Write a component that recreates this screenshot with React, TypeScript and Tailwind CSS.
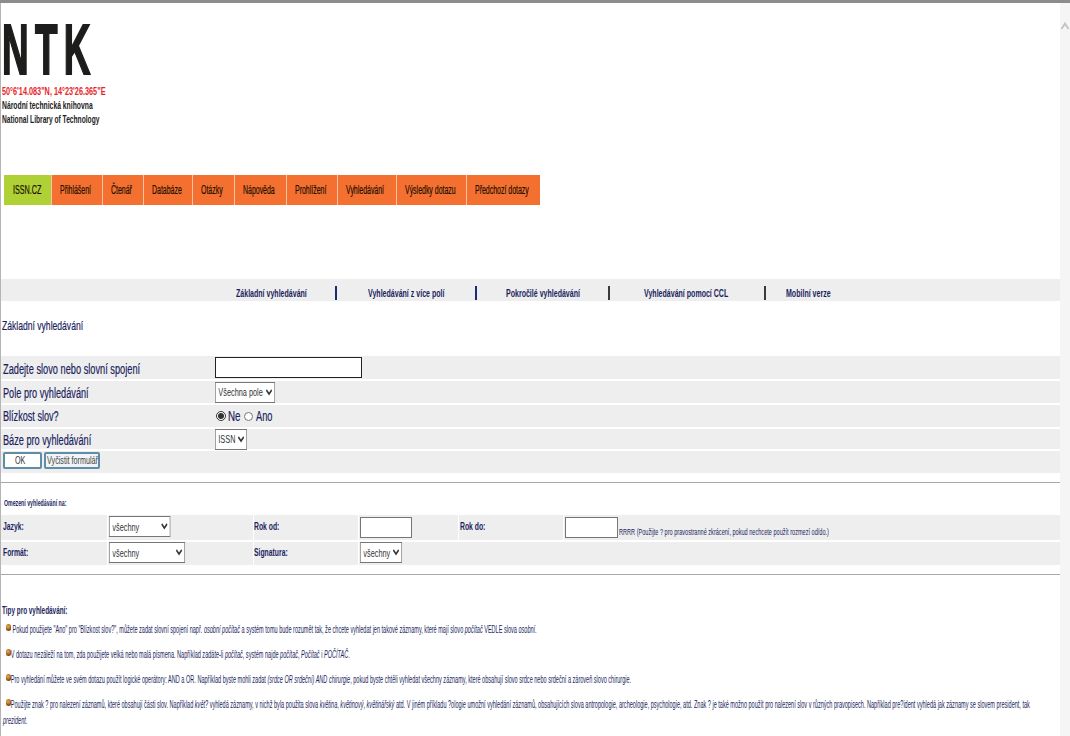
import React from 'react';

const NAVY = 'text-[#1b1f5e]';

// the reference text is squeezed sideways, so every label gets a narrow scale
function Sq({ children, className = 'scale-x-[0.64]' }: { children: React.ReactNode; className?: string }) {
  return <span className={`inline-block origin-left whitespace-nowrap ${className}`}>{children}</span>;
}

const menu = [
  { label: 'Přihlášení', w: 'w-[51px]' },
  { label: 'Čtenář', w: 'w-[41px]' },
  { label: 'Databáze', w: 'w-[49px]' },
  { label: 'Otázky', w: 'w-[42px]' },
  { label: 'Nápověda', w: 'w-[52px]' },
  { label: 'Prohlížení', w: 'w-[51px]' },
  { label: 'Vyhledávání', w: 'w-[59px]' },
  { label: 'Výsledky dotazu', w: 'w-[70px]' },
  { label: 'Předchozí dotazy', w: 'w-[73px]' },
];

function Tip({ children, indent }: { children: React.ReactNode; indent: string }) {
  return (
    <div className="relative">
      <span className="absolute left-[3px] top-[2px] h-[7px] w-[5px] rounded-full bg-[radial-gradient(circle_at_40%_35%,#e8b060,#9a5a10_60%,#4a2c08)]" />
      <p className={`w-[1880px] origin-left scale-x-[0.555] text-[10px] leading-[16px] ${indent}`}>{children}</p>
    </div>
  );
}

const rowLabel = `text-[14px] leading-[18px] [-webkit-text-stroke:0.2px] ${NAVY}`;
const filterCell = `bg-[#eeeeee] text-[11px] font-bold leading-[14px] ${NAVY}`;
// selects are drawn wide and squeezed, same as the text around them
const selectCls = 'h-[21px] origin-left scale-x-[0.667] border border-[#767676] bg-white px-0 text-[11px] font-normal text-[#333]';

export default function App() {
  return (
    <div className="flex h-[736px] w-[1070px] overflow-hidden border-t-[3px] border-[#8c8c8c] bg-white font-['Liberation_Sans',Arial,sans-serif]">
      <main className="flex min-w-0 flex-1 flex-col border-l border-[#b5b5b5]">
        <header className="h-[172px] shrink-0">
          <div className="h-[82px] pl-[1px] pt-[10px]">
            <span className="inline-block origin-left scale-x-[0.52] whitespace-nowrap text-[71px] font-bold leading-[74px] tracking-[12px] text-[#1d1d1b] [-webkit-text-stroke:2px]">
              NTK
            </span>
          </div>
          <div className="pl-[1px] text-[10px] font-bold leading-[14px]">
            <div className="text-[#e8262a]"><Sq className="scale-x-[0.73]">50°6'14.083"N, 14°23'26.365"E</Sq></div>
            <div className="text-[#222]"><Sq className="scale-x-[0.68]">Národní technická knihovna</Sq></div>
            <div className="text-[#222]"><Sq className="scale-x-[0.665]">National Library of Technology</Sq></div>
          </div>
        </header>

        <nav className="ml-[3px] flex h-[30px] shrink-0 text-[12px] leading-[16px] text-[#1a0f05] [-webkit-text-stroke:0.2px]">
          <div className="flex w-[47px] items-center bg-[#b0d136] pl-[9px]"><Sq className="scale-x-[0.6]">ISSN.CZ</Sq></div>
          <div className="w-[1px] bg-[#f9c4a6]" />
          {menu.map((m) => (
            <div key={m.label} className={`flex ${m.w} items-center border-r border-[#f9c4a6] bg-[#f47030] pl-[8px] last:border-r-0`}>
              <Sq className="scale-x-[0.58]">{m.label}</Sq>
            </div>
          ))}
        </nav>

        <div className={`mt-[74px] flex h-[22px] shrink-0 items-end bg-[#eeeeee] pb-[1px] pl-[235px] text-[11px] font-bold leading-[14px] ${NAVY}`}>
          <span className="w-[99px]"><Sq>Základní vyhledávání</Sq></span>
          <span className="h-[14px] w-[2px] bg-[#1b2a78]" />
          <span className="ml-[31px] w-[107px]"><Sq>Vyhledávání z více polí</Sq></span>
          <span className="h-[14px] w-[2px] bg-[#1b2a78]" />
          <span className="ml-[29px] w-[102px]"><Sq>Pokročilé vyhledávání</Sq></span>
          <span className="h-[14px] w-[2px] bg-[#3a3a3a]" />
          <span className="ml-[34px] w-[120px]"><Sq>Vyhledávání pomocí CCL</Sq></span>
          <span className="h-[14px] w-[2px] bg-[#3a3a3a]" />
          <span className="ml-[20px]"><Sq>Mobilní verze</Sq></span>
        </div>

        <div className={`mt-[16px] h-[39px] shrink-0 pl-[1px] text-[13px] leading-[18px] [-webkit-text-stroke:0.2px] ${NAVY}`}>
          <Sq className="scale-x-[0.66]">Základní vyhledávání</Sq>
        </div>

        <form className="flex shrink-0 flex-col gap-[2px]">
          <div className="flex h-[23px] items-center bg-[#eeeeee] pl-[2px]">
            <span className={`w-[212px] pt-[2px] ${rowLabel}`}><Sq className="scale-x-[0.66]">Zadejte slovo nebo slovní spojení</Sq></span>
            <input className="h-[21px] w-[147px] border border-[#222] bg-white" />
          </div>
          <div className="flex h-[22px] items-center bg-[#eeeeee] pl-[2px]">
            <span className={`w-[212px] pt-[1px] ${rowLabel}`}><Sq className="scale-x-[0.655]">Pole pro vyhledávání</Sq></span>
            <select className={`w-[90px] ${selectCls}`}>
              <option>Všechna pole</option>
            </select>
          </div>
          <div className="flex h-[22px] items-center bg-[#eeeeee] pl-[2px]">
            <span className={`w-[213px] ${rowLabel}`}><Sq className="scale-x-[0.65]">Blízkost slov?</Sq></span>
            <input type="radio" name="prox" defaultChecked className="m-0 h-[10px] w-[10px] accent-[#333]" />
            <span className={`ml-[2px] w-[16px] ${rowLabel}`}><Sq className="scale-x-[0.7]">Ne</Sq></span>
            <input type="radio" name="prox" className="m-0 h-[9px] w-[9px]" />
            <span className={`ml-[3px] ${rowLabel}`}><Sq className="scale-x-[0.66]">Ano</Sq></span>
          </div>
          <div className="flex h-[20px] items-center bg-[#eeeeee] pl-[2px]">
            <span className={`w-[212px] pt-[1px] ${rowLabel}`}><Sq className="scale-x-[0.655]">Báze pro vyhledávání</Sq></span>
            <select className={`w-[48px] ${selectCls}`}>
              <option>ISSN</option>
            </select>
          </div>
          <div className="flex h-[22px] items-start gap-[2px] bg-[#eeeeee] pl-[2px] pt-[1px]">
            <button type="button" className="h-[17px] w-[39px] rounded-[2px] border-2 border-[#5f8ca6] bg-white text-[10px] leading-[12px] text-[#333]">
              <Sq className="origin-center scale-x-[0.72]">OK</Sq>
            </button>
            <button type="button" className="h-[17px] w-[56px] rounded-[2px] border-2 border-[#5f8ca6] bg-[#f1f4f6] pl-[1px] text-left text-[10px] leading-[12px] text-[#444]">
              <Sq className="scale-x-[0.72]">Vyčistit formulář</Sq>
            </button>
          </div>
        </form>

        <hr className="mt-[9px] shrink-0 border-t border-[#a8a8a8]" />

        <div className={`mt-[14px] h-[18px] shrink-0 pl-[3px] text-[9px] font-bold leading-[12px] ${NAVY}`}>
          <Sq className="scale-x-[0.58]">Omezení vyhledávání na:</Sq>
        </div>

        <div className="grid shrink-0 grid-cols-[106px_145px_104px_99px_104px_1fr] gap-x-[1px] gap-y-[2px]">
          <div className={`h-[25px] pl-[2px] pt-[4px] ${filterCell}`}><Sq className="scale-x-[0.62]">Jazyk:</Sq></div>
          <div className={`h-[25px] pl-[1px] pt-[1px] ${filterCell}`}>
            <select className={`w-[92px] ${selectCls}`}><option>všechny</option></select>
          </div>
          <div className={`h-[25px] pt-[4px] ${filterCell}`}><Sq className="scale-x-[0.62]">Rok od:</Sq></div>
          <div className={`h-[25px] pl-[1px] pt-[2px] ${filterCell}`}>
            <input className="h-[21px] w-[52px] border border-[#767676] bg-white" />
          </div>
          <div className={`h-[25px] pl-[1px] pt-[4px] ${filterCell}`}><Sq className="scale-x-[0.62]">Rok do:</Sq></div>
          <div className="flex h-[25px] items-end bg-[#eeeeee] pb-[2px] pl-[1px]">
            <input className="h-[21px] w-[53px] border border-[#767676] bg-white" />
            <span className={`ml-[1px] text-[9px] leading-[12px] ${NAVY}`}>
              <Sq className="scale-x-[0.62]">RRRR (Použijte ? pro pravostranné zkrácení, pokud nechcete použít rozmezí od/do.)</Sq>
            </span>
          </div>

          <div className={`h-[23px] pl-[2px] pt-[3px] ${filterCell}`}><Sq className="scale-x-[0.62]">Formát:</Sq></div>
          <div className={`h-[23px] pl-[1px] ${filterCell}`}>
            <select className={`w-[114px] ${selectCls}`}><option>všechny</option></select>
          </div>
          <div className={`h-[23px] pt-[3px] ${filterCell}`}><Sq className="scale-x-[0.62]">Signatura:</Sq></div>
          <div className={`col-span-3 h-[23px] pl-[1px] ${filterCell}`}>
            <select className={`w-[63px] ${selectCls}`}><option>všechny</option></select>
          </div>
        </div>

        <hr className="mt-[9px] shrink-0 border-t border-[#a8a8a8]" />

        <div className={`mt-[28px] h-[14px] shrink-0 pl-[1px] text-[11px] font-bold leading-[14px] ${NAVY}`}>
          <Sq className="scale-x-[0.58]">Tipy pro vyhledávání:</Sq>
        </div>

        <div className={`mt-[5px] flex shrink-0 flex-col gap-[9px] pl-[2px] ${NAVY}`}>
          <Tip indent="indent-[17px]">Pokud použijete "Ano" pro "Blízkost slov?", můžete zadat slovní spojení např. <i>osobní počítač</i> a systém tomu bude rozumět tak, že chcete vyhledat jen takové záznamy, které mají slovo <i>počítač</i> VEDLE slova <i>osobní</i>.</Tip>
          <Tip indent="indent-[14px]">V dotazu nezáleží na tom, zda použijete velká nebo malá písmena. Například zadáte-li <i>počítač</i>, systém najde <i>počítač</i>, <i>Počítač</i> i <i>POČÍTAČ</i>.</Tip>
          <Tip indent="indent-[14px]">Pro vyhledání můžete ve svém dotazu použít logické operátory: AND a OR. Například byste mohli zadat <i>(srdce OR srdeční) AND chirurgie</i>, pokud byste chtěli vyhledat všechny záznamy, které obsahují slovo srdce nebo srdeční a zároveň slovo chirurgie.</Tip>
          <Tip indent="indent-[14px]">Použijte znak ? pro nalezení záznamů, které obsahují části slov. Například <i>květ?</i> vyhledá záznamy, v nichž byla použita slova <i>květina</i>, <i>květinový</i>, <i>květinářský</i> atd. V jiném příkladu ?ologie umožní vyhledání záznamů, obsahujících slova antropologie, archeologie, psychologie, atd. Znak ? je také možno použít pro nalezení slov v různých pravopisech. Například pre?ident vyhledá jak záznamy se slovem president, tak <i>prezident</i>.</Tip>
        </div>
      </main>

      <aside className="relative w-[10px] shrink-0 bg-[#f5f5f5]">
        <svg viewBox="0 0 10 10" className="absolute left-0 top-[18px] h-[10px] w-[10px]" fill="none" stroke="#c4c4c4" strokeWidth="2">
          <path d="M1.5 8 L5 2.5 L8.5 8" />
        </svg>
      </aside>
    </div>
  );
}
